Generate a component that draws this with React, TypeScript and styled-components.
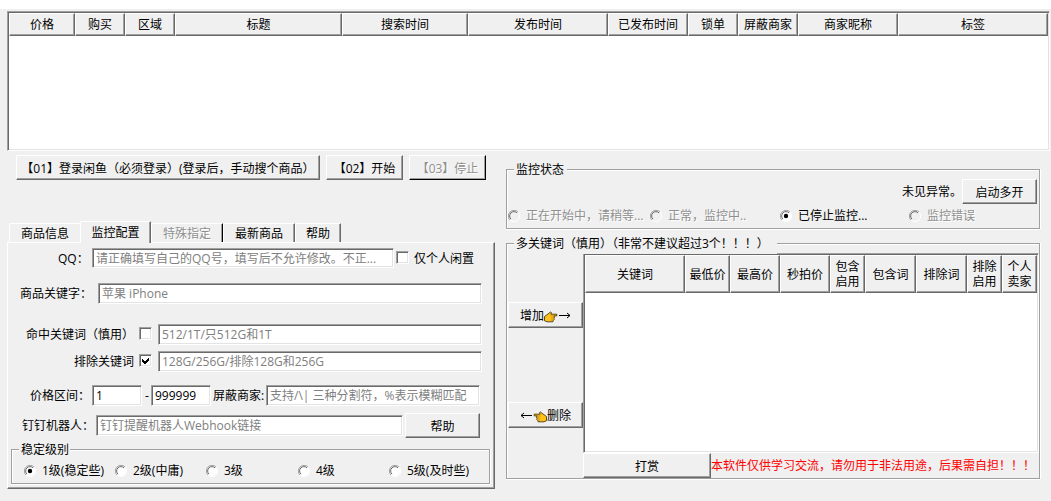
import React from "react";
import styled, { createGlobalStyle, css } from "styled-components";

const Global = createGlobalStyle`
  html, body { margin: 0; padding: 0; background: #fff; overflow: hidden; }
  * { box-sizing: border-box; }
  body, button, input {
    font-family: "Open Sans", "Noto Sans CJK SC", sans-serif;
    font-size: 12px;
    color: #000;
  }
`;

const Page = styled.div`
  width: 1051px;
  height: 501px;
  border-top: 9px solid #fff;
  padding: 2px 1px 0 7px;
  background: #f0f0f0;
  display: flex;
  flex-direction: column;
`;

const Sunken = css`
  background: #fff;
  border: 1px solid;
  border-color: #a0a0a0 #fff #fff #a0a0a0;
  box-shadow: inset 1px 1px 0 #696969, inset -1px -1px 0 #e3e3e3;
`;

const Raised = css<{ $strong?: boolean }>`
  background: #f0f0f0;
  border: 1px solid;
  border-color: ${(p) => (p.$strong ? "#fff #000 #000 #fff" : "#fff #696969 #696969 #fff")};
  box-shadow: inset -1px -1px 0 #a0a0a0;
`;

const Table = styled.div<{ $w: number; $h: number }>`
  ${Sunken}
  flex: none;
  width: ${(p) => p.$w}px;
  height: ${(p) => p.$h}px;
  padding: 1px;
`;

const HeadRow = styled.div<{ $h: number }>`
  display: flex;
  height: ${(p) => p.$h}px;
`;

const HeadCell = styled.div<{ $w: number }>`
  ${Raised}
  flex: none;
  width: ${(p) => p.$w}px;
  display: flex;
  align-items: center;
  justify-content: center;
  text-align: center;
  line-height: 15px;
  white-space: pre;
`;

const Columns = styled.div`
  display: flex;
  align-items: flex-start;
`;

const LeftColumn = styled.div`
  flex: none;
  width: 488px;
  padding-top: 4px;
`;

const RightColumn = styled.div`
  margin: 18px 0 0 11px;
  width: 534px;
`;

const Toolbar = styled.div`
  display: flex;
  gap: 6px;
  padding-left: 9px;
  margin-bottom: 41px;
`;

const Button = styled.button<{ $w: number; $h?: number; $ml?: number; $mt?: number; $strong?: boolean }>`
  ${Raised}
  flex: none;
  display: flex;
  align-items: center;
  justify-content: center;
  padding: 0;
  width: ${(p) => p.$w}px;
  height: ${(p) => p.$h ?? 25}px;
  margin: ${(p) => p.$mt ?? 0}px 0 0 ${(p) => p.$ml ?? 0}px;
  white-space: nowrap;
  border-radius: 0;
  &:disabled { color: #8f8f8f; text-shadow: 1px 1px 0 #fff; }
`;

const Tabs = styled.div`
  display: flex;
  align-items: flex-end;
  height: 21px;
  padding-left: 2px;
`;

const Tab = styled.div<{ $w: number; $active?: boolean; $first?: boolean; $edge?: string; $off?: boolean }>`
  flex: none;
  width: ${(p) => p.$w}px;
  height: ${(p) => (p.$active ? 22 : 19)}px;
  margin-bottom: ${(p) => (p.$active ? -1 : 0)}px;
  padding-top: ${(p) => (p.$active ? 1 : 0)}px;
  z-index: ${(p) => (p.$active ? 1 : 0)};
  line-height: 19px;
  text-align: center;
  background: #f0f0f0;
  border-top: 1px solid #fff;
  border-left: 1px solid #fff;
  border-right: ${(p) => (p.$first ? "0" : `1px solid ${p.$edge ?? "#696969"}`)};
  border-radius: 2px 1px 0 0;
  box-shadow: ${(p) => (p.$first ? "none" : "inset -1px 0 0 #a0a0a0")};
  color: ${(p) => (p.$off ? "#8f8f8f" : "#000")};
  text-shadow: ${(p) => (p.$off ? "1px 1px 0 #fff" : "none")};
`;

const Panel = styled.div`
  ${Raised}
  width: 488px;
  height: 247px;
  padding: 5px 0 0;
`;

const Row = styled.div<{ $mt?: number; $h?: number }>`
  display: flex;
  align-items: flex-start;
  height: ${(p) => p.$h ?? 20}px;
  margin-top: ${(p) => p.$mt ?? 0}px;
`;

const Label = styled.span<{ $ml?: number; $w?: number; $c?: string }>`
  flex: none;
  margin-left: ${(p) => p.$ml ?? 0}px;
  width: ${(p) => (p.$w ? `${p.$w}px` : "auto")};
  line-height: 21px;
  white-space: nowrap;
  color: ${(p) => p.$c ?? "#000"};
`;

const Input = styled.input<{ $w: number; $ml?: number; $big?: boolean }>`
  ${Sunken}
  flex: none;
  width: ${(p) => p.$w}px;
  height: ${(p) => (p.$big ? 21 : 20)}px;
  margin-left: ${(p) => p.$ml ?? 0}px;
  padding: 0 2px 0 3px;
  border-radius: 0;
  outline: 0;
  text-overflow: ellipsis;
  &::placeholder { color: #808080; opacity: 1; }
`;

const Box = styled.span<{ $ml: number }>`
  ${Sunken}
  flex: none;
  display: flex;
  width: 13px;
  height: 13px;
  margin: 3px 0 0 ${(p) => p.$ml}px;
`;

const Group = styled.fieldset<{ $h: number; $w?: number; $ml?: number; $mt?: number }>`
  position: relative;
  display: flex;
  flex-direction: column;
  min-width: 0;
  width: ${(p) => (p.$w ? `${p.$w}px` : "auto")};
  height: ${(p) => p.$h}px;
  margin: ${(p) => p.$mt ?? 0}px 0 0 ${(p) => p.$ml ?? 0}px;
  padding: 0;
  border: 1px solid #a0a0a0;
  box-shadow: inset 1px 1px 0 #fff, 0 1px 0 #fff, 1px 0 0 #fff;
`;

/* The caption lies over the frame's top edge. */
const Caption = styled.span<{ $w: number }>`
  position: absolute;
  top: -10px;
  left: 7px;
  width: ${(p) => p.$w}px;
  padding-left: 2px;
  line-height: 20px;
  white-space: nowrap;
  background: #f0f0f0;
`;

const RadioLabel = styled.label<{ $w: number; $off?: boolean }>`
  flex: none;
  display: flex;
  align-items: center;
  gap: 6px;
  width: ${(p) => p.$w}px;
  line-height: 20px;
  white-space: nowrap;
  color: ${(p) => (p.$off ? "#8f8f8f" : "#000")};
  text-shadow: ${(p) => (p.$off ? "1px 1px 0 #fff" : "none")};
`;

const StatusTop = styled.div`
  display: flex;
  justify-content: flex-end;
  padding: 9px 2px 0 0;
`;

const Split = styled.div`
  display: flex;
  padding: 9px 0 0 1px;
`;

const Side = styled.div`
  flex: none;
  width: 75px;
  padding-top: 49px;
`;

const Foot = styled.div`
  display: flex;
`;

function Radio({ w, on, off, children }: { w: number; on?: boolean; off?: boolean; children: React.ReactNode }) {
  return (
    <RadioLabel $w={w} $off={off}>
      <svg width="12" height="12" viewBox="0 0 12 12">
        <circle cx="6" cy="6" r="5" fill={off ? "#f0f0f0" : "#fff"} />
        <path d="M2 10A5.5 5.5 0 0 1 10 2" fill="none" stroke="#a0a0a0" />
        <path d="M2.9 9A4.3 4.3 0 0 1 9 2.9" fill="none" stroke="#696969" />
        <path d="M2 10A5.5 5.5 0 0 0 10 2" fill="none" stroke="#fff" />
        {on && <circle cx="6" cy="6" r="2.2" fill="#000" />}
      </svg>
      <span>{children}</span>
    </RadioLabel>
  );
}

function Check({ ml, on }: { ml: number; on?: boolean }) {
  return (
    <Box $ml={ml}>
      {on && (
        <svg width="11" height="11" viewBox="0 0 11 11" shapeRendering="crispEdges">
          <path d="M2 4v3l2 2h1l4-4V2L5 6H4z" fill="#000" />
        </svg>
      )}
    </Box>
  );
}

function Hand({ left }: { left?: boolean }) {
  return (
    <svg width="14" height="12" viewBox="0 0 14 12" style={{ transform: left ? "scaleX(-1)" : undefined, marginTop: 4 }}>
      <path
        d="M.5 5.5 4 3l2.5-2 1 .6L6.8 3.2h6v1.7H9.6l1 1-.6 1.4.2 1.2-.9 1-.4 1.3H3L.5 9.7z"
        fill="#fcc21b"
        stroke="#4a3b12"
        strokeWidth=".9"
      />
      <path d="M6.5 5h3M7 7h3M6.8 9h2.5" stroke="#b9770e" strokeWidth=".6" />
    </svg>
  );
}

function Arrow({ left }: { left?: boolean }) {
  return (
    <svg width="13" height="9" viewBox="0 0 13 9" style={{ transform: left ? "scaleX(-1)" : undefined }}>
      <path d="M1 4.5h11M9 2l3 2.5L9 7" fill="none" stroke="#000" />
    </svg>
  );
}

const goods: [string, number][] = [
  ["价格", 66], ["购买", 50], ["区域", 50], ["标题", 167], ["搜索时间", 126], ["发布时间", 140],
  ["已发布时间", 80], ["锁单", 50], ["屏蔽商家", 60], ["商家昵称", 100], ["标签", 150],
];

const keywords: [string, number][] = [
  ["关键词", 100], ["最低价", 45], ["最高价", 50], ["秒拍价", 50], ["包含\n启用", 35],
  ["包含词", 51], ["排除词", 51], ["排除\n启用", 35], ["个人\n卖家", 35],
];

export default function App() {
  return (
    <>
      <Global />
      <Page>
        <Table $w={1043} $h={140}>
          <HeadRow $h={23}>
            {goods.map(([t, w]) => <HeadCell key={t} $w={w}>{t}</HeadCell>)}
          </HeadRow>
        </Table>
        <Columns>
          <LeftColumn>
            <Toolbar>
              <Button $w={304}>【01】登录闲鱼（必须登录）(登录后，手动搜个商品）</Button>
              <Button $w={77}>【02】开始</Button>
              <Button $w={77} $strong disabled>【03】停止</Button>
            </Toolbar>
            <Tabs>
              <Tab $w={71} $first>商品信息</Tab>
              <Tab $w={71} $active>监控配置</Tab>
              <Tab $w={72} $off $edge="#000">特殊指定</Tab>
              <Tab $w={72}>最新商品</Tab>
              <Tab $w={46}>帮助</Tab>
            </Tabs>
            <Panel>
              <Row>
                <Label $ml={50} $w={34}>QQ：</Label>
                <Input $w={302} placeholder="请正确填写自己的QQ号，填写后不允许修改。不正..." readOnly />
                <Check ml={2} />
                <Label $ml={5}>仅个人闲置</Label>
              </Row>
              <Row $mt={15} $h={21}>
                <Label $ml={12} $w={78}>商品关键字：</Label>
                <Input $w={384} $big placeholder="苹果 iPhone" readOnly />
              </Row>
              <Row $mt={20}>
                <Label $ml={18} $w={113}>命中关键词（慎用）</Label>
                <Check ml={0} />
                <Input $w={324} $ml={6} $big placeholder="512/1T/只512G和1T" readOnly />
              </Row>
              <Row $mt={7}>
                <Label $ml={66} $w={65}>排除关键词</Label>
                <Check ml={0} on />
                <Input $w={324} $ml={6} $big placeholder="128G/256G/排除128G和256G" readOnly />
              </Row>
              <Row $mt={14}>
                <Label $ml={22} $w={62}>价格区间：</Label>
                <Input $w={50} $big defaultValue="1" readOnly />
                <Label $ml={3} $w={6}>-</Label>
                <Input $w={60} $big defaultValue="999999" readOnly />
                <Label $ml={2} $w={53}>屏蔽商家:</Label>
                <Input $w={214} $big placeholder="支持/\| 三种分割符，%表示模糊匹配" readOnly />
              </Row>
              <Row $mt={8} $h={25}>
                <Label $ml={14} $w={74} style={{ marginTop: 2 }}>钉钉机器人：</Label>
                <Input $w={307} $big placeholder="钉钉提醒机器人Webhook链接" readOnly style={{ marginTop: 2 }} />
                <Button $w={75} $ml={2}>帮助</Button>
              </Row>
              <Group $w={479} $h={35} $ml={3} $mt={11}>
                <Caption $w={51}>稳定级别</Caption>
                <Row $mt={11} style={{ paddingLeft: 12 }}>
                  <Radio w={91} on>1级(稳定些)</Radio>
                  <Radio w={91}>2级(中庸)</Radio>
                  <Radio w={92}>3级</Radio>
                  <Radio w={91}>4级</Radio>
                  <Radio w={84}>5级(及时些)</Radio>
                </Row>
              </Group>
            </Panel>
          </LeftColumn>
          <RightColumn>
            <Group $h={60}>
              <Caption $w={53}>监控状态</Caption>
              <StatusTop>
                <Label $w={60} style={{ marginTop: 2 }}>未见异常。</Label>
                <Button $w={75}>启动多开</Button>
              </StatusTop>
              <Row $mt={2} style={{ paddingLeft: 1 }}>
                <Radio w={142} off>正在开始中，请稍等...</Radio>
                <Radio w={130} off>正常，监控中..</Radio>
                <Radio w={129} on>已停止监控...</Radio>
                <Radio w={80} off>监控错误</Radio>
              </Row>
            </Group>
            <Group $h={236} $mt={14}>
              <Caption $w={263}>多关键词（慎用）（非常不建议超过3个！！！）</Caption>
              <Split>
                <Side>
                  <Button $w={75} $h={26}>增加<Hand /><Arrow /></Button>
                  <Button $w={75} $h={26} $mt={74}><Arrow left /><Hand left />删除</Button>
                </Side>
                <div>
                  <Table $w={456} $h={200}>
                    <HeadRow $h={38}>
                      {keywords.map(([t, w]) => <HeadCell key={t} $w={w}>{t}</HeadCell>)}
                    </HeadRow>
                  </Table>
                  <Foot>
                    <Button $w={128}>打赏</Button>
                    <Label $c="#f00" style={{ marginTop: 2 }}>本软件仅供学习交流，请勿用于非法用途，后果需自担！！！</Label>
                  </Foot>
                </div>
              </Split>
            </Group>
          </RightColumn>
        </Columns>
      </Page>
    </>
  );
}
